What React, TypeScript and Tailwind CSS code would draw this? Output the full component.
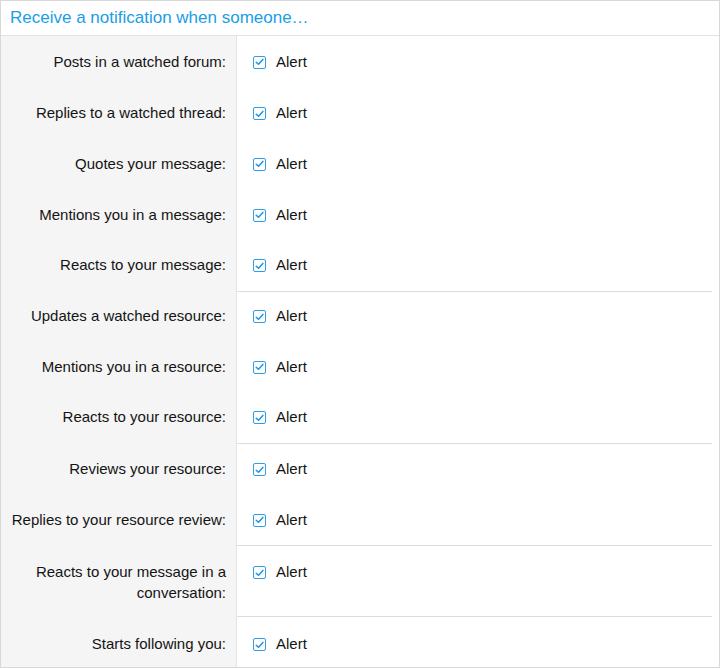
import React from "react";

type Row = { label: React.ReactNode; sep?: boolean; dt: string; dd: string; lh?: string };

const rows: Row[] = [
  { label: "Posts in a watched forum:", dt: "pt-[15px] pb-[16px]", dd: "pt-[15px] pb-[16px]" },
  { label: "Replies to a watched thread:", dt: "py-[15px]", dd: "py-[15px]" },
  { label: "Quotes your message:", dt: "py-[15px]", dd: "py-[15px]" },
  { label: "Mentions you in a message:", dt: "py-[15px]", dd: "py-[15px]" },
  { label: "Reacts to your message:", dt: "py-[15px]", dd: "py-[15px]" },
  { label: "Updates a watched resource:", sep: true, dt: "py-[15px]", dd: "pt-[14px] pb-[15px]" },
  { label: "Mentions you in a resource:", dt: "py-[15px]", dd: "py-[15px]" },
  { label: "Reacts to your resource:", dt: "py-[15px]", dd: "py-[15px]" },
  { label: "Reviews your resource:", sep: true, dt: "pt-[16px] pb-[15px]", dd: "pt-[15px] pb-[15px]" },
  { label: "Replies to your resource review:", dt: "pt-[15px] pb-[14px]", dd: "pt-[15px] pb-[14px]" },
  {
    label: (
      <>
        Reacts to your message in a<br />
        conversation:
      </>
    ),
    sep: true,
    lh: "leading-[21px]",
    dt: "pt-[16.5px] pb-[12.5px]",
    dd: "pt-[16.5px] pb-[12.5px]",
  },
  { label: "Starts following you:", sep: true, dt: "pt-[18.5px] pb-[12px]", dd: "pt-[17.5px] pb-[12px]" },
];

function Check() {
  return (
    <span className="mt-[4px] flex h-[13px] w-[13px] shrink-0 items-center justify-center rounded-[2px] border-[1.5px] border-[#2f9fea] bg-white">
      <svg width="9" height="8" viewBox="0 0 9 8" fill="none">
        <path d="M1.2 4.2 L3.5 6.3 L7.9 1.4" stroke="#1f93e2" strokeWidth="1.5" strokeLinecap="round" strokeLinejoin="round" />
      </svg>
    </span>
  );
}

export default function App() {
  return (
    <div
      className="box-border h-[668px] w-[720px] overflow-hidden border border-[#d8d8d8] bg-white text-[15px] text-[#141414]"
      style={{ fontFamily: '"Liberation Sans", Arial, Helvetica, sans-serif' }}
    >
      <div className="h-[35px] border-b border-[#e2e2e2] pl-[9px] pr-[10px] pt-[6px] text-[17px] leading-[22px] text-[#1a9de6]">
        Receive a notification when someone…
      </div>
      <div className="flex flex-col pt-[0.5px] bg-[linear-gradient(to_right,#f5f5f5_235px,#e4e4e4_235px,#e4e4e4_236px,#ffffff_236px)]">
        {rows.map((r, i) => (
          <div key={i} className="flex">
            <div
              className={
                "box-border w-[235px] shrink-0 bg-[#f5f5f5] pr-[10px] text-right " +
                (r.lh ?? "leading-[20.7px]") +
                " " +
                r.dt
              }
            >
              {r.label}
            </div>
            <div className="w-px shrink-0 bg-[#e4e4e4]" />
            <div
              className={
                "mr-[7px] flex flex-1 items-start gap-[10px] pl-[16px] leading-[20.7px] " +
                (r.sep ? "border-t border-[#dcdcdc] " : "") +
                r.dd
              }
            >
              <Check />
              <span>Alert</span>
            </div>
          </div>
        ))}
      </div>
    </div>
  );
}
